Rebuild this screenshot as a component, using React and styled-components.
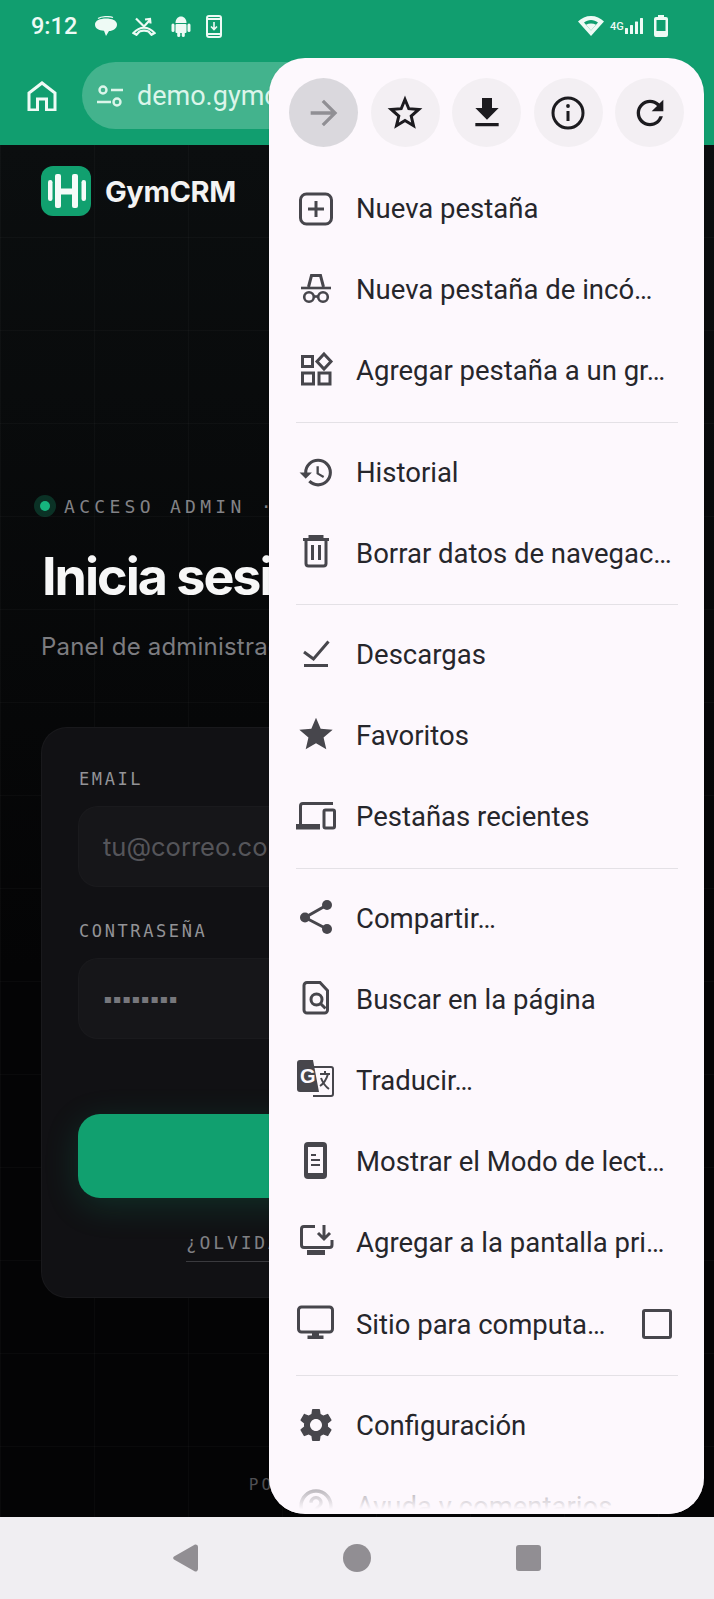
import React from 'react'
import styled, { createGlobalStyle } from 'styled-components'
import { MdHistory, MdSettings, MdHelpOutline, MdFileDownload, MdRefresh, MdArrowForward } from 'react-icons/md'

const GlobalStyle = createGlobalStyle`
  html, body { margin: 0; padding: 0; background: #050506; }
  * { box-sizing: border-box; }
`

const MONO = `"DejaVu Sans Mono", "Liberation Mono", monospace`
const SANS = `Inter, "Noto Sans", sans-serif`
const UI = `Roboto, "Noto Sans", sans-serif`

const Screen = styled.div`
  position: relative;
  width: 714px;
  height: 1599px;
  display: flex;
  flex-direction: column;
  overflow: hidden;
  font-family: ${UI};
`

const TopChrome = styled.header`
  background: #119e6f;
  color: #eefaf5;
`

const StatusBar = styled.div`
  height: 52px;
  display: flex;
  align-items: center;
  padding: 0 46px 0 31px;
`

const Clock = styled.span`
  font-size: 23.5px;
  font-weight: 500;
  width: 64px;
`

const StatusGroup = styled.div`
  display: flex;
  align-items: center;
  gap: ${props => props.$gap || 14}px;
`

const Spacer = styled.div`
  flex: 1;
`

const Toolbar = styled.div`
  height: 93px;
  padding: 10px 0 16px 27px;
  display: flex;
  align-items: center;
  gap: 25px;
`

const UrlPill = styled.div`
  flex: 1;
  height: 67px;
  border-radius: 34px;
  background: #43b38d;
  display: flex;
  align-items: center;
  gap: 13px;
  padding-left: 14px;
  margin-right: 80px;
  font-size: 27px;
  color: #dcf5ea;
`

const Main = styled.main`
  flex: 1;
  min-height: 0;
  padding: 21px 41px 0;
  background-color: #060708;
  background-image:
    linear-gradient(rgba(255, 255, 255, 0.022) 1px, transparent 1px),
    linear-gradient(90deg, rgba(255, 255, 255, 0.022) 1px, transparent 1px),
    linear-gradient(#0b0e0f, #040405 60%);
  background-size: 94px 93px, 94px 93px, 100% 100%;
  background-position: 0 -1px, 0 0, 0 0;
`

const Brand = styled.div`
  display: flex;
  align-items: center;
  gap: 14px;
  height: 50px;
`

const BrandName = styled.span`
  font-family: ${SANS};
  font-weight: 700;
  font-size: 29px;
  letter-spacing: -0.4px;
  color: #f3f3f3;
`

const Eyebrow = styled.div`
  margin-top: 278px;
  height: 24px;
  display: flex;
  align-items: center;
  gap: 11px;
  font-family: ${MONO};
  font-size: 18px;
  letter-spacing: 4.3px;
  color: #828286;
  white-space: nowrap;
`

const PulseDot = styled.span`
  width: 10px;
  height: 10px;
  margin: 0 3px 0 -1px;
  border-radius: 50%;
  background: #16b57f;
  box-shadow: 0 0 0 6px rgba(22, 181, 127, 0.24);
`

const Headline = styled.h1`
  margin: 28px 0 0 1px;
  font-family: ${SANS};
  font-weight: 700;
  font-size: 52px;
  line-height: 62px;
  letter-spacing: -2px;
  color: #f7f7f7;
  white-space: nowrap;
`

const Subtitle = styled.p`
  margin: 24px 0 0;
  font-family: ${SANS};
  font-size: 24px;
  line-height: 30px;
  letter-spacing: 0.2px;
  color: #7c7c80;
  white-space: nowrap;
`

const Card = styled.section`
  margin-top: 65px;
  padding: 40px 36px 35px;
  border: 1px solid rgba(255, 255, 255, 0.035);
  border-radius: 26px;
  background: #111114;
`

const FieldLabel = styled.label`
  display: block;
  margin-top: ${props => props.$top || 0}px;
  margin-left: 1px;
  font-family: ${MONO};
  font-size: 17px;
  line-height: 22px;
  letter-spacing: 2.6px;
  color: #939397;
`

const Input = styled.div`
  margin-top: 16px;
  height: 81px;
  padding-left: 24px;
  display: flex;
  align-items: center;
  border: 1px solid rgba(255, 255, 255, 0.02);
  border-radius: 20px;
  background: #161619;
  font-family: ${props => (props.$secret ? MONO : SANS)};
  font-size: ${props => (props.$secret ? 15.5 : 25.5)}px;
  color: ${props => (props.$secret ? '#77777c' : '#55555a')};
`

const SubmitButton = styled.div`
  margin-top: 75px;
  height: 84px;
  border-radius: 22px;
  background: #11a06f;
  box-shadow: 0 8px 34px rgba(16, 185, 129, 0.18);
`

const ForgotRow = styled.div`
  margin-top: 33px;
  display: flex;
  justify-content: center;
`

const ForgotLink = styled.span`
  padding-bottom: 6px;
  border-bottom: 1px solid #3a3a3e;
  font-family: ${MONO};
  font-size: 18px;
  line-height: 24px;
  letter-spacing: 2.85px;
  color: #808084;
`

const Footnote = styled.div`
  margin-top: 177px;
  text-align: center;
  font-family: ${MONO};
  font-size: 16px;
  line-height: 20px;
  letter-spacing: 3.1px;
  color: #4f4f53;
`

const NavBar = styled.nav`
  height: 82px;
  background: #f0eef2;
  display: flex;
  align-items: center;
  justify-content: center;
  gap: 145px;
`

const NavCircle = styled.span`
  width: 28px;
  height: 28px;
  border-radius: 50%;
  background: #918e93;
`

const NavSquare = styled.span`
  width: 25px;
  height: 26px;
  border-radius: 3px;
  background: #918e93;
`

const Menu = styled.aside`
  position: absolute;
  top: 58px;
  left: 269px;
  width: 435px;
  height: 1456px;
  padding-top: 20px;
  border-radius: 36px;
  background: #fdf8fd;
  overflow: hidden;
  box-shadow: 0 1px 2px rgba(0, 0, 0, 0.12);
`

const ActionRow = styled.div`
  display: flex;
  justify-content: space-between;
  padding: 0 20px;
  margin-bottom: 21px;
`

const ActionButton = styled.div`
  width: 69px;
  height: 69px;
  border-radius: 50%;
  display: flex;
  align-items: center;
  justify-content: center;
  background: ${props => (props.$active ? '#dad8dd' : '#f3eff3')};
  color: ${props => (props.$active ? '#908f94' : '#1c1b1f')};
`

const Row = styled.div`
  height: 81.2px;
  display: flex;
  align-items: center;
  gap: 20px;
  padding: 0 32px 0 27px;
  font-size: 27.5px;
  color: #26262b;
  white-space: nowrap;
`

const Glyph = styled.span`
  flex: none;
  width: 40px;
  height: 40px;
  display: flex;
  align-items: center;
  justify-content: center;
  color: #47464c;
`

const Divider = styled.div`
  height: 1px;
  margin: 10px 26px 9px 27px;
  background: #e4e1e6;
`

const Checkbox = styled.span`
  margin-left: auto;
  width: 30px;
  height: 30px;
  border: 3px solid #47464c;
  border-radius: 3px;
`

const MenuFade = styled.div`
  position: absolute;
  left: 0;
  right: 0;
  bottom: 0;
  height: 46px;
  background: linear-gradient(rgba(253, 248, 253, 0.25), #fdf8fd 90%);
`

const Svg = ({ children, size = 40, box = 40 }) => (
  <svg width={size} height={size} viewBox={`0 0 ${box} ${box}`} fill="none" stroke="currentColor" strokeWidth="3">
    {children}
  </svg>
)

const NewTabIcon = () => (
  <Svg>
    <rect x="4.5" y="5" width="31" height="30" rx="6" />
    <path d="M20 12v16M12 20h16" />
  </Svg>
)

const IncognitoIcon = () => (
  <Svg>
    <path d="M5 18h30" strokeWidth="2.600" />
    <path d="M12.500 17l3-11.500h9l3 11.500" />
    <circle cx="13" cy="27" r="4.800" strokeWidth="2.600" />
    <circle cx="27" cy="27" r="4.800" strokeWidth="2.600" />
    <path d="M17.500 26.500h5" strokeWidth="2.600" />
  </Svg>
)

const GroupIcon = () => (
  <Svg>
    <rect x="6.500" y="5.500" width="10" height="10" />
    <path d="M28 3l7 7.500-7 7.500-7-7.500z" />
    <rect x="6.500" y="22" width="11" height="11" />
    <rect x="23" y="22" width="11" height="11" />
  </Svg>
)

const TrashIcon = () => (
  <Svg>
    <path d="M7 6.500h26M14 6.500v-3h12v3" />
    <path d="M10 6.500v24a2.500 2.500 0 0 0 2.500 2.500h15a2.500 2.500 0 0 0 2.500-2.500v-24" />
    <path d="M16.500 12v15M23.500 12v15" />
  </Svg>
)

const DownloadsIcon = () => (
  <Svg>
    <path d="M8 17l9.500 7L32.500 6.500" />
    <path d="M8 30.500h24" />
  </Svg>
)

const StarFilledIcon = () => (
  <Svg size={40} box={24}>
    <path
      fill="currentColor"
      stroke="none"
      d="M12 16.300l6.180 3.700-1.640-7.030L22 8.240l-7.190-.62L12 1 9.190 7.620 2 8.240l5.460 4.730L5.820 20z"
    />
  </Svg>
)

const RecentTabsIcon = () => (
  <Svg>
    <path d="M37 6.500H7a2.500 2.500 0 0 0-2.500 2.500v19" />
    <rect x="0" y="27" width="24" height="5.500" fill="currentColor" stroke="none" />
    <rect x="28" y="13" width="10.500" height="18" rx="1.500" />
  </Svg>
)

const ShareIcon = () => (
  <Svg>
    <path d="M31 7L9 19.500 31 31" />
    <circle cx="31" cy="7" r="5" fill="currentColor" stroke="none" />
    <circle cx="31" cy="31" r="5" fill="currentColor" stroke="none" />
    <circle cx="9" cy="19.500" r="5" fill="currentColor" stroke="none" />
  </Svg>
)

const FindIcon = () => (
  <Svg>
    <path d="M11 3.500h13l7.500 8V31a3 3 0 0 1-3 3H11a3 3 0 0 1-3-3V6.500a3 3 0 0 1 3-3z" />
    <circle cx="20.500" cy="20.500" r="5.500" />
    <path d="M24.500 24.500l5 5" />
  </Svg>
)

const TranslateIcon = () => (
  <Svg>
    <path fill="currentColor" stroke="none" d="M4 0h13l6 32H4a3 3 0 0 1-3-3V3a3 3 0 0 1 3-3z" />
    <path strokeWidth="2" d="M17 7h18a2 2 0 0 1 2 2v25a2 2 0 0 1-2 2H17" />
    <text x="4" y="23" fontFamily="Liberation Sans, sans-serif" fontWeight="700" fontSize="20" fill="#fdf8fd" stroke="none">G</text>
    <path strokeWidth="2" d="M24 14h10M29 11v3M32 14c-2 7-5 10-8 12M25 18c2 5 5 9 8 11" />
  </Svg>
)

const ReaderIcon = () => (
  <Svg>
    <rect x="8" y="0" width="23" height="37" rx="4" fill="currentColor" stroke="none" />
    <rect x="12" y="5" width="15" height="26" fill="#fdf8fd" stroke="none" />
    <path strokeWidth="2" d="M15 13h5M15 18h9M15 23h9" />
  </Svg>
)

const AddHomeIcon = () => (
  <Svg>
    <path d="M19 3.500H8a2.500 2.500 0 0 0-2.500 2.500v16a2.500 2.500 0 0 0 2.500 2.500h25.500a2.500 2.500 0 0 0 2.500-2.500v-5" />
    <rect x="11" y="27" width="18" height="5" fill="currentColor" stroke="none" />
    <path d="M28 2v13M22 10l6 6 6-6" />
  </Svg>
)

const DesktopIcon = () => (
  <Svg>
    <rect x="2.500" y="3" width="34" height="25" rx="3" />
    <rect x="16" y="27" width="7" height="5" fill="currentColor" stroke="none" />
    <rect x="11.500" y="31.500" width="16" height="3.500" fill="currentColor" stroke="none" />
  </Svg>
)

const OutlineStarIcon = () => (
  <Svg>
    <path d="M20 6.500l3.800 9.200 9.900.8-7.500 6.500 2.300 9.700L20 27.500l-8.500 5.200 2.300-9.700-7.500-6.500 9.900-.8z" />
  </Svg>
)

const InfoIcon = () => (
  <Svg>
    <circle cx="20" cy="20" r="15" />
    <path d="M20 18v10" />
    <circle cx="20" cy="13" r="1.900" fill="currentColor" stroke="none" />
  </Svg>
)

const TuneIcon = () => (
  <Svg size={28} box={28}>
    <circle cx="7" cy="8" r="3.500" strokeWidth="2.400" />
    <path strokeWidth="2.400" d="M15 8h12M1 20h14" />
    <circle cx="21" cy="20" r="3.500" strokeWidth="2.400" />
  </Svg>
)

const HomeIcon = () => (
  <Svg size={30} box={30}>
    <path d="M2 29V12L15 2l13 10v17h-8.500V18h-9v11z" />
  </Svg>
)

const LogoMark = () => (
  <svg width="50" height="50" viewBox="0 0 50 50">
    <rect width="50" height="50" rx="12" fill="#11a06f" />
    <g fill="#f5fbf8">
      <rect x="7" y="14" width="4.500" height="21" rx="2.200" />
      <rect x="14" y="8" width="6" height="34" rx="2" />
      <rect x="14" y="22.500" width="23" height="6" />
      <rect x="31" y="8" width="6" height="34" rx="2" />
      <rect x="40.500" y="14" width="4.500" height="21" rx="2.200" />
    </g>
  </svg>
)

const BubbleIcon = () => (
  <svg width="22" height="20" viewBox="0 0 22 20" fill="currentColor">
    <path d="M11 2.500c6 0 11 2 11 6s-4 6.500-8 6.500l-3 5-2-5.200C4 14.500 0 12.500 0 8.500s5-6 11-6z" />
    <path d="M3 2.500C6 .5 14 0 18 1.500" fill="none" stroke="currentColor" strokeWidth="1.300" />
  </svg>
)

const MissedCallIcon = () => (
  <svg width="24" height="19" viewBox="0 0 24 19" fill="none" stroke="currentColor" strokeWidth="2.200">
    <path d="M4 1.500l8 8 5.500-6M13 2.500l5-.5.500 4.500" />
    <path d="M1.500 16c6-7 15-7 21 0l-3 1.800-3-3.300c-3-1.300-6-1.300-9 0l-3 3.300z" />
  </svg>
)

const AndroidIcon = () => (
  <svg width="20" height="21" viewBox="0 0 20 21" fill="currentColor">
    <path d="M4.500 7C4.500 3 7 .5 10 .5S15.500 3 15.500 7z" />
    <rect x="4.500" y="8" width="11" height="9" rx="1" />
    <rect x="0.500" y="7.500" width="3" height="8.500" rx="1.500" />
    <rect x="16.500" y="7.500" width="3" height="8.500" rx="1.500" />
    <rect x="6.200" y="15" width="3" height="6" rx="1.500" />
    <rect x="10.800" y="15" width="3" height="6" rx="1.500" />
  </svg>
)

const PhoneDownloadIcon = () => (
  <svg width="16" height="23" viewBox="0 0 16 23" fill="none" stroke="currentColor" strokeWidth="2">
    <rect x="1" y="1" width="14" height="21" rx="2" />
    <path d="M1 4h14M1 19h14" />
    <path d="M8 7v7M5 11.500l3 3 3-3" strokeWidth="1.600" />
  </svg>
)

const WifiIcon = () => (
  <svg width="26" height="20" viewBox="0 0 26 20" fill="currentColor">
    <path d="M13 20L0 5.500C3.500 2 8 0 13 0s9.500 2 13 5.500zM13 14.500l7-8C18 5 15.500 4 13 4S8 5 6 6.500z" fillRule="evenodd" />
    <path d="M13 14.500l5-5.800c-3-1.600-7-1.600-10 0z" />
  </svg>
)

const SignalBars = () => (
  <svg width="19" height="16" viewBox="0 0 19 16" fill="currentColor">
    <rect x="0" y="10" width="3" height="6" rx="0.500" />
    <rect x="5" y="7" width="3" height="9" rx="0.500" />
    <rect x="10" y="3.500" width="3" height="12.500" rx="0.500" />
    <rect x="15" y="0" width="3" height="16" rx="0.500" />
  </svg>
)

const BatteryIcon = () => (
  <svg width="14" height="22" viewBox="0 0 14 22" fill="currentColor">
    <rect x="4" y="0" width="6" height="3" />
    <path d="M2 2h10a2 2 0 0 1 2 2v16a2 2 0 0 1-2 2H2a2 2 0 0 1-2-2V4a2 2 0 0 1 2-2zm.500 3v11h9V5z" fillRule="evenodd" />
  </svg>
)

const NetLabel = styled.span`
  font-size: 11px;
  font-weight: 500;
  width: 14px;
  margin-right: -5px;
`

const BatterySlot = styled.span`
  display: flex;
  margin-left: 4px;
`

const BackTriangle = () => (
  <svg width="25" height="28" viewBox="0 0 25 28" fill="#918e93" style={{ display: 'block' }}>
    <path d="M22 .500a2.500 2.500 0 0 1 3 2.500v22a2.500 2.500 0 0 1-3 2.500L1 15.500a2 2 0 0 1 0-3z" />
  </svg>
)

const sections = [
  [
    { icon: <NewTabIcon />, label: 'Nueva pestaña' },
    { icon: <IncognitoIcon />, label: 'Nueva pestaña de incó…' },
    { icon: <GroupIcon />, label: 'Agregar pestaña a un gr…' },
  ],
  [
    { icon: <MdHistory size={37} />, label: 'Historial' },
    { icon: <TrashIcon />, label: 'Borrar datos de navegac…' },
  ],
  [
    { icon: <DownloadsIcon />, label: 'Descargas' },
    { icon: <StarFilledIcon />, label: 'Favoritos' },
    { icon: <RecentTabsIcon />, label: 'Pestañas recientes' },
  ],
  [
    { icon: <ShareIcon />, label: 'Compartir…' },
    { icon: <FindIcon />, label: 'Buscar en la página' },
    { icon: <TranslateIcon />, label: 'Traducir…' },
    { icon: <ReaderIcon />, label: 'Mostrar el Modo de lect…' },
    { icon: <AddHomeIcon />, label: 'Agregar a la pantalla pri…' },
    { icon: <DesktopIcon />, label: 'Sitio para computa…', check: true },
  ],
  [
    { icon: <MdSettings size={42} />, label: 'Configuración' },
    { icon: <MdHelpOutline size={40} />, label: 'Ayuda y comentarios' },
  ],
]

export default function App() {
  return (
    <Screen>
      <GlobalStyle />
      <TopChrome>
        <StatusBar>
          <Clock>9:12</Clock>
          <StatusGroup $gap={15}>
            <BubbleIcon />
            <MissedCallIcon />
            <AndroidIcon />
            <PhoneDownloadIcon />
          </StatusGroup>
          <Spacer />
          <StatusGroup $gap={6}>
            <WifiIcon />
            <NetLabel>4G</NetLabel>
            <SignalBars />
            <BatterySlot>
              <BatteryIcon />
            </BatterySlot>
          </StatusGroup>
        </StatusBar>
        <Toolbar>
          <HomeIcon />
          <UrlPill>
            <TuneIcon />
            demo.gymcrm.app
          </UrlPill>
        </Toolbar>
      </TopChrome>

      <Main>
        <Brand>
          <LogoMark />
          <BrandName>GymCRM</BrandName>
        </Brand>
        <Eyebrow>
          <PulseDot />
          ACCESO ADMIN · GYMCRM
        </Eyebrow>
        <Headline>Inicia sesión</Headline>
        <Subtitle>Panel de administración</Subtitle>
        <Card>
          <FieldLabel>EMAIL</FieldLabel>
          <Input>tu@correo.com</Input>
          <FieldLabel $top={33}>CONTRASEÑA</FieldLabel>
          <Input $secret>▪▪▪▪▪▪▪▪</Input>
          <SubmitButton />
          <ForgotRow>
            <ForgotLink>¿OLVIDASTE TU CONTRASEÑA?</ForgotLink>
          </ForgotRow>
        </Card>
        <Footnote>POWERED BY GYMCRM</Footnote>
      </Main>

      <NavBar>
        <BackTriangle />
        <NavCircle />
        <NavSquare />
      </NavBar>

      <Menu>
        <ActionRow>
          <ActionButton $active><MdArrowForward size={40} /></ActionButton>
          <ActionButton><OutlineStarIcon /></ActionButton>
          <ActionButton><MdFileDownload size={40} /></ActionButton>
          <ActionButton><InfoIcon /></ActionButton>
          <ActionButton><MdRefresh size={40} /></ActionButton>
        </ActionRow>
        {sections.map((rows, i) => (
          <React.Fragment key={i}>
            {i > 0 && <Divider />}
            {rows.map(row => (
              <Row key={row.label}>
                <Glyph>{row.icon}</Glyph>
                {row.label}
                {row.check && <Checkbox />}
              </Row>
            ))}
          </React.Fragment>
        ))}
        <MenuFade />
      </Menu>
    </Screen>
  )
}
